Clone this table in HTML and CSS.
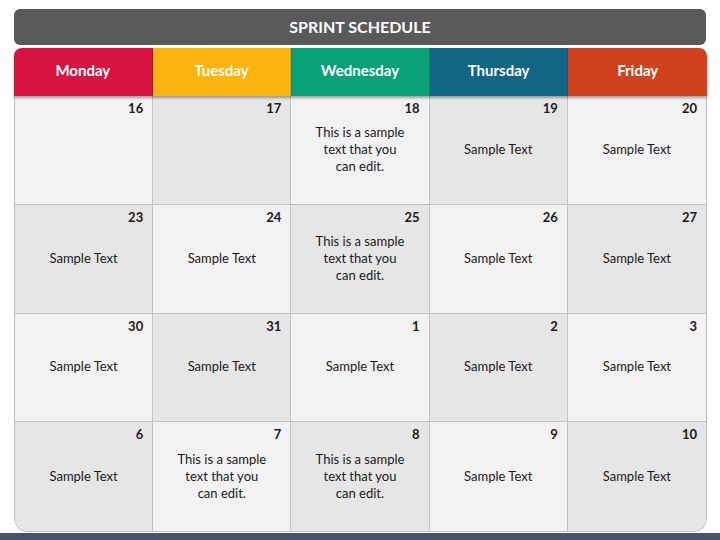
FILE: index.html
```html
<!DOCTYPE html>
<html>
<head>
<meta charset="utf-8">
<link rel="stylesheet" href="styles.css">
</head>
<body>
<div class="page">
  <div class="title">SPRINT SCHEDULE</div>
  <div class="calendar">
    <div class="head">
      <div class="day mon">Monday</div>
      <div class="day tue">Tuesday</div>
      <div class="day wed">Wednesday</div>
      <div class="day thu">Thursday</div>
      <div class="day fri">Friday</div>
    </div>
    <div class="grid">
      <div class="cell light"><div class="num">16</div><div class="txt"></div></div>
      <div class="cell dark"><div class="num">17</div><div class="txt"></div></div>
      <div class="cell light"><div class="num">18</div><div class="txt">This is a sample<br>text that you<br>can edit.</div></div>
      <div class="cell dark"><div class="num">19</div><div class="txt">Sample Text</div></div>
      <div class="cell light"><div class="num">20</div><div class="txt">Sample Text</div></div>

      <div class="cell dark"><div class="num">23</div><div class="txt">Sample Text</div></div>
      <div class="cell light"><div class="num">24</div><div class="txt">Sample Text</div></div>
      <div class="cell dark"><div class="num">25</div><div class="txt">This is a sample<br>text that you<br>can edit.</div></div>
      <div class="cell light"><div class="num">26</div><div class="txt">Sample Text</div></div>
      <div class="cell dark"><div class="num">27</div><div class="txt">Sample Text</div></div>

      <div class="cell light"><div class="num">30</div><div class="txt">Sample Text</div></div>
      <div class="cell dark"><div class="num">31</div><div class="txt">Sample Text</div></div>
      <div class="cell light"><div class="num">1</div><div class="txt">Sample Text</div></div>
      <div class="cell dark"><div class="num">2</div><div class="txt">Sample Text</div></div>
      <div class="cell light"><div class="num">3</div><div class="txt">Sample Text</div></div>

      <div class="cell dark"><div class="num">6</div><div class="txt">Sample Text</div></div>
      <div class="cell light"><div class="num">7</div><div class="txt">This is a sample<br>text that you<br>can edit.</div></div>
      <div class="cell dark"><div class="num">8</div><div class="txt">This is a sample<br>text that you<br>can edit.</div></div>
      <div class="cell light"><div class="num">9</div><div class="txt">Sample Text</div></div>
      <div class="cell dark"><div class="num">10</div><div class="txt">Sample Text</div></div>
    </div>
  </div>
</div>
<div class="footer"></div>
</body>
</html>
```
FILE: styles.css
```css
* { box-sizing: border-box; }
html, body { margin: 0; padding: 0; }
body {
  width: 720px;
  height: 540px;
  background: #ffffff;
  font-family: "Lato", "Open Sans", sans-serif;
  color: #1a1a1a;
  overflow: hidden;
  position: relative;
}
.page {
  padding: 9px 13px 0 14px;
  display: flex;
  flex-direction: column;
}
.title {
  height: 36px;
  width: 692px;
  background: #5a5a5a;
  border-radius: 6px;
  color: #ffffff;
  font-weight: 700;
  font-size: 16px;
  display: flex;
  align-items: center;
  justify-content: center;
  padding-bottom: 2px;
}
.calendar {
  margin-top: 3px;
  width: 693px;
}
.head {
  display: grid;
  grid-template-columns: repeat(5, 1fr);
  height: 48px;
  border-radius: 8px 8px 0 0;
  overflow: hidden;
  position: relative;
  z-index: 2;
  box-shadow: 0 2px 3px rgba(0,0,0,0.35);
}
.day {
  display: flex;
  align-items: center;
  justify-content: center;
  color: #ffffff;
  font-weight: 700;
  font-size: 15px;
  padding-bottom: 4px;
  border-right: 1px solid rgba(0,0,0,0.15);
}
.day:last-child { border-right: none; }
.mon { background: #d81342; }
.tue { background: #fdb40e; }
.wed { background: #07a077; }
.thu { background: #106684; }
.fri { background: #cf421d; }
.grid {
  display: grid;
  grid-template-columns: repeat(5, 1fr);
  grid-template-rows: repeat(4, 108.75px);
  border: 1px solid #bfbfbf;
  border-top: none;
  border-radius: 0 0 14px 14px;
  overflow: hidden;
}
.cell {
  display: flex;
  flex-direction: column;
  border-right: 1px solid #c4c4c4;
  border-bottom: 1px solid #c4c4c4;
  padding: 4px 9px 22px 9px;
}
.cell:nth-child(5n) { border-right: none; }
.cell:nth-child(n+16) { border-bottom: none; }
.light { background: #f2f2f2; }
.dark { background: #e6e6e6; }
.num {
  text-align: right;
  font-weight: 700;
  font-size: 13px;
  line-height: 17px;
  height: 17px;
}
.txt {
  flex: 1;
  display: flex;
  align-items: center;
  justify-content: center;
  text-align: center;
  font-size: 13px;
  line-height: 17px;
}
.footer {
  position: absolute;
  left: 0;
  bottom: 0;
  width: 720px;
  height: 7px;
  background: #44546a;
}
```
